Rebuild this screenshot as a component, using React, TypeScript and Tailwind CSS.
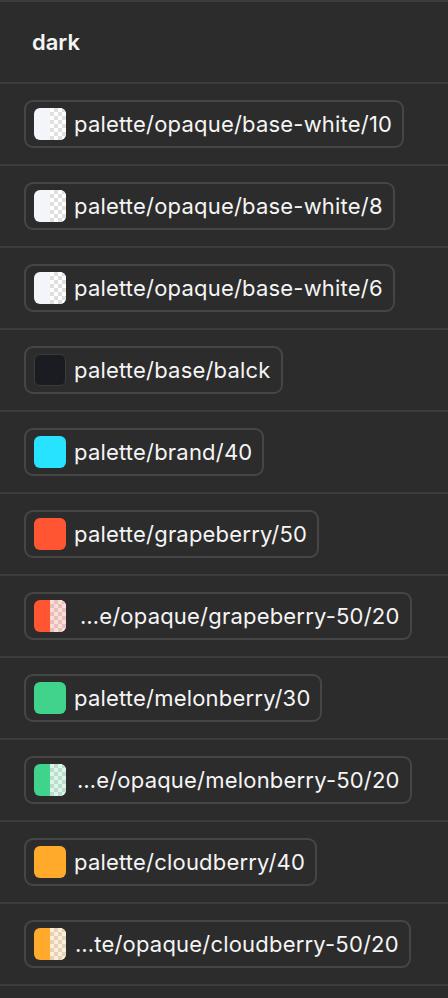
import React from "react";

type Token = {
  label: string;
  color: string;
  checker?: string; // tint over the checkerboard half
  outline?: boolean;
  indent?: string;
};

const tokens: Token[] = [
  { label: "palette/opaque/base-white/10", color: "#f4f5fb", checker: "rgba(244,245,251,0.1)" },
  { label: "palette/opaque/base-white/8", color: "#f4f5fb", checker: "rgba(244,245,251,0.08)" },
  { label: "palette/opaque/base-white/6", color: "#f4f5fb", checker: "rgba(244,245,251,0.06)" },
  { label: "palette/base/balck", color: "#1b1c21", outline: true },
  { label: "palette/brand/40", color: "#27e3ff" },
  { label: "palette/grapeberry/50", color: "#ff5533" },
  { label: "…e/opaque/grapeberry-50/20", color: "#ff5533", checker: "rgba(255,85,51,0.2)", indent: "pl-[6px]" },
  { label: "palette/melonberry/30", color: "#3fd38c" },
  { label: "…e/opaque/melonberry-50/20", color: "#3fd38c", checker: "rgba(63,211,140,0.2)", indent: "pl-[3px]" },
  { label: "palette/cloudberry/40", color: "#ffaa2b" },
  { label: "…te/opaque/cloudberry-50/20", color: "#ffaa2b", checker: "rgba(255,170,43,0.2)", indent: "pl-[1px]" },
];

function Swatch({ t }: { t: Token }) {
  if (!t.checker) {
    return (
      <span
        className={
          "block w-8 h-8 rounded-[6px] shrink-0 " + (t.outline ? "border border-[#3a3b3f]" : "")
        }
        style={{ backgroundColor: t.color }}
      />
    );
  }
  return (
    <span className="flex w-8 h-8 rounded-[6px] overflow-hidden shrink-0">
      <span className="block w-4 h-8" style={{ backgroundColor: t.color }} />
      <span className="relative block w-4 h-8 bg-white bg-[conic-gradient(#dedede_25%,#ffffff_0_50%,#dedede_0_75%,#ffffff_0)] bg-[length:8px_8px]">
        <span className="absolute inset-0" style={{ backgroundColor: t.checker }} />
      </span>
    </span>
  );
}

export default function App() {
  return (
    <div className="w-[448px] h-[998px] overflow-hidden bg-[#2c2c2c] text-[#f5f5f5] font-['Inter','Noto_Sans',sans-serif] border-t-2 border-[#3d3d3d]">
      <div className="h-[82px] flex items-center px-8 border-b-2 border-[#3d3d3d]">
        <span className="text-[22px] font-semibold">dark</span>
      </div>
      {tokens.map((t) => (
        <div key={t.label} className="h-[82px] flex items-center px-6 border-b-2 border-[#3d3d3d]">
          <div className="flex items-center gap-2 pl-2 pr-[10px] py-[6px] rounded-[9px] border-2 border-[#464646]">
            <Swatch t={t} />
            <span className={"text-[22px] leading-8 tracking-[0.2px] whitespace-nowrap " + (t.indent ?? "")}>
              {t.label}
            </span>
          </div>
        </div>
      ))}
    </div>
  );
}
